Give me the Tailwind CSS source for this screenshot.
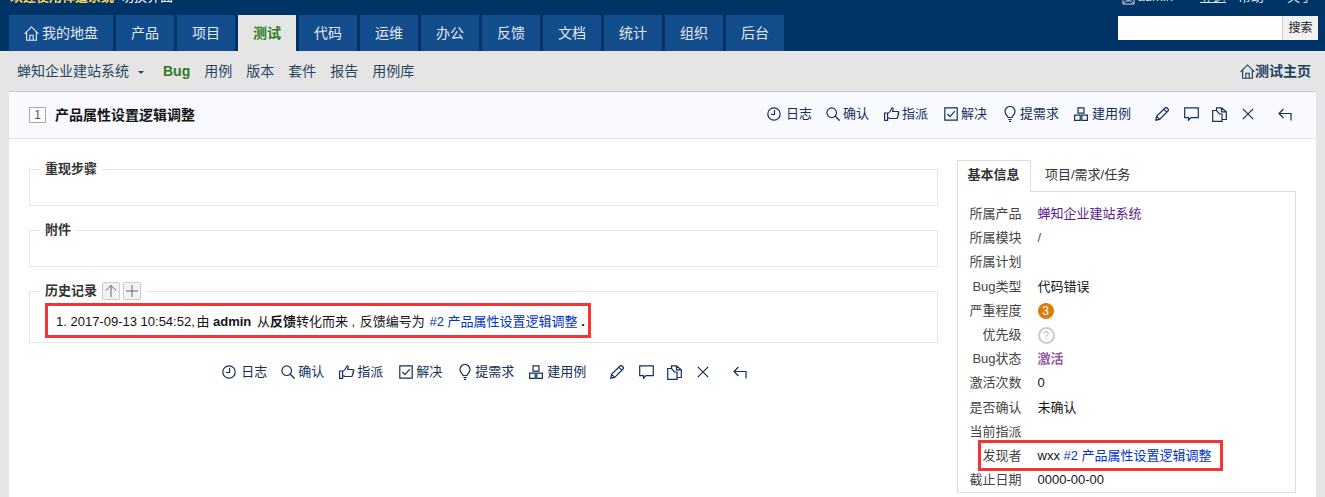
<!DOCTYPE html>
<html lang="zh-CN">
<head>
    <meta charset="UTF-8">
    <meta name="viewport" content="width=device-width, initial-scale=1.0">
    <title>产品属性设置逻辑调整</title>
    <script src="https://cdn.jsdelivr.net/npm/@tailwindcss/browser@4"></script>
</head>
<body class="relative h-[497px] overflow-hidden bg-[#e5e5e5] text-[13px] leading-[18px] text-[#141414] font-['Liberation_Sans','Noto_Sans_CJK_SC',sans-serif]">

    <!-- Icon sprite -->
    <svg class="hidden" xmlns="http://www.w3.org/2000/svg">
        <symbol id="i-home" viewBox="0 0 16 16"><path d="M.6 8.4 8 1l7.400 7.400M2.800 6.400v8.800h10.400V6.400M6.200 15.200V9.800h3.600v5.400" fill="none" stroke="currentColor" stroke-width="1.200"/></symbol>
        <symbol id="i-user" viewBox="0 0 14 14"><path d="M1 1h12v12H1zM2 12.500c.5-2.500 2.500-3 5-3s4.500.5 5 3M7 3a2.800 2.800 0 1 0 0 5.600A2.800 2.800 0 0 0 7 3" fill="none" stroke="currentColor"/></symbol>
        <symbol id="i-clock" viewBox="0 0 14 14"><circle cx="7" cy="7" r="6.200" fill="none" stroke="currentColor" stroke-width="1.200"/><path d="M7.500 3v4.500H4" fill="none" stroke="currentColor" stroke-width="1.200"/></symbol>
        <symbol id="i-search" viewBox="0 0 14 14"><circle cx="5.700" cy="5.700" r="4.800" fill="none" stroke="currentColor" stroke-width="1.200"/><path d="m9 9 4.600 4.600" fill="none" stroke="currentColor" stroke-width="1.300"/></symbol>
        <symbol id="i-thumb" viewBox="0 0 16 14"><path d="M.6 6h3v7.400h-3zM3.600 6.400c1.600-.6 3-2.200 3.600-4 .3-1 .6-1.800 1.300-1.600.9.300.8 1.900.1 3.700h5.200c1.200 0 1.300 1.500.4 1.800.7.500.5 1.600-.3 1.800.4.700.2 1.500-.5 1.800.2.900-.3 1.600-1.200 1.600H7c-1.400 0-2.200-.6-3.400-.9" fill="none" stroke="currentColor" stroke-width="1.200"/></symbol>
        <symbol id="i-check" viewBox="0 0 14 14"><path d="M.8.800h12.400v12.400H.8z" fill="none" stroke="currentColor" stroke-width="1.200"/><path d="m3.400 7 2.600 2.600 4.800-5.400" fill="none" stroke="currentColor" stroke-width="1.200"/></symbol>
        <symbol id="i-bulb" viewBox="0 0 12 16"><path d="M4 11.500C3.600 9.600 1 8.600 1 5.500a5 5 0 0 1 10 0c0 3.100-2.600 4.100-3 6zM4.300 13.500h3.400M5 15.300h2" fill="none" stroke="currentColor" stroke-width="1.200"/></symbol>
        <symbol id="i-case" viewBox="0 0 14 14"><path d="M4 .8h6v5.400H4zM.6 8.200h5.600v5.200H.6zM7.800 8.200h5.600v5.200H7.800z" fill="none" stroke="currentColor" stroke-width="1.200"/></symbol>
        <symbol id="i-pencil" viewBox="0 0 14 14"><path d="m.8 13.200.8-3.800L10 1c.6-.6 1.400-.6 2 0l1 1c.6.6.6 1.400 0 2l-8.400 8.400zM1.600 9.400l3 3M8.800 2.200l3 3" fill="none" stroke="currentColor" stroke-width="1.200"/></symbol>
        <symbol id="i-comment" viewBox="0 0 15 14"><path d="M.7.800h13.600v9.800H7L4.500 13.200v-2.600H.7z" fill="none" stroke="currentColor" stroke-width="1.200"/></symbol>
        <symbol id="i-copy" viewBox="0 0 15 15"><path d="M.7 3.500h3.800l3 3.500H10v7.300H.7zM4.500 3.500V.8h5l4.800 4v7.700H10M9.500.8v4h4.800" fill="none" stroke="currentColor" stroke-width="1.200"/></symbol>
        <symbol id="i-close" viewBox="0 0 12 12"><path d="m.8.800 10.400 10.400M11.200.800.800 11.200" fill="none" stroke="currentColor" stroke-width="1.200"/></symbol>
        <symbol id="i-back" viewBox="0 0 14 13"><path d="M5.500 1 1 5.500 5.500 10M1 5.500h12V12.500" fill="none" stroke="currentColor" stroke-width="1.200"/></symbol>
    </svg>

    <!-- Top bar -->
    <header class="h-[51px] overflow-hidden bg-[#003366]">
        <div class="-mt-[12px] flex h-[27px] pl-[10px] pr-[12px]">
            <span class="font-bold text-[#ffd75e]">欢迎使用禅道系统</span>
            <span class="ml-[7px] text-white">切换界面</span>
            <div class="ml-auto flex text-[#dfe6ee]">
                <span class="mt-[4px]"><svg class="mr-[3px] h-[13px] w-[13px]"><use href="#i-user"/></svg></span>
                <span>admin</span>
                <span class="ml-[27px] underline">登退</span>
                <span class="ml-[12px]">帮助</span>
                <span class="ml-[23px]">关于</span>
            </div>
        </div>
        <div class="flex items-start pl-[9px] pr-[7px]">
            <nav class="flex h-[36px] gap-[3px]">
                <a class="flex w-[104px] items-center justify-center gap-[3px] bg-[#134d8c] text-sm text-[#e4e9f0]">
                    <svg class="h-[15px] w-[15px]"><use href="#i-home"/></svg>我的地盘
                </a>
                <a class="flex w-[58px] items-center justify-center bg-[#134d8c] text-sm text-[#e4e9f0]">产品</a>
                <a class="flex w-[58px] items-center justify-center bg-[#134d8c] text-sm text-[#e4e9f0]">项目</a>
                <a class="flex w-[58px] items-center justify-center bg-[#e5e5e5] text-sm font-bold text-[#2f7d1e]">测试</a>
                <a class="flex w-[58px] items-center justify-center bg-[#134d8c] text-sm text-[#e4e9f0]">代码</a>
                <a class="flex w-[58px] items-center justify-center bg-[#134d8c] text-sm text-[#e4e9f0]">运维</a>
                <a class="flex w-[58px] items-center justify-center bg-[#134d8c] text-sm text-[#e4e9f0]">办公</a>
                <a class="flex w-[58px] items-center justify-center bg-[#134d8c] text-sm text-[#e4e9f0]">反馈</a>
                <a class="flex w-[58px] items-center justify-center bg-[#134d8c] text-sm text-[#e4e9f0]">文档</a>
                <a class="flex w-[58px] items-center justify-center bg-[#134d8c] text-sm text-[#e4e9f0]">统计</a>
                <a class="flex w-[58px] items-center justify-center bg-[#134d8c] text-sm text-[#e4e9f0]">组织</a>
                <a class="flex w-[58px] items-center justify-center bg-[#134d8c] text-sm text-[#e4e9f0]">后台</a>
            </nav>
            <div class="ml-auto mt-px flex h-[24px]">
                <input type="text" class="h-full w-[164px] bg-white">
                <button class="h-full w-[36px] border-l border-[#ccc] bg-[#f2f2f2] text-xs text-[#222]">搜索</button>
            </div>
        </div>
    </header>

    <!-- Sub navigation -->
    <div class="flex h-[40px] items-center pl-[17px] pr-[14px] text-sm text-[#2b4560]">
        <span>蝉知企业建站系统</span>
        <span class="ml-[9px] mr-[19px] mt-[2px] h-0 w-0 border-x-[3px] border-t-[3px] border-x-transparent border-t-[#2b4560]"></span>
        <a class="mr-[14px] font-bold text-[#2f7d1e]">Bug</a>
        <a class="mr-[14px]">用例</a>
        <a class="mr-[14px]">版本</a>
        <a class="mr-[14px]">套件</a>
        <a class="mr-[14px]">报告</a>
        <a>用例库</a>
        <a class="ml-auto flex items-center font-bold text-[#1f3f60]">
            <svg class="h-[15px] w-[15px]"><use href="#i-home"/></svg>测试主页
        </a>
    </div>

    <!-- Main card -->
    <main class="mx-[9px] h-[420px] border-t border-[#ccc] bg-white">
        <div class="flex h-[47px] items-center border-b border-[#e5e5e5] bg-[#f9faff] pl-[20px] pr-[24px]">
            <span class="flex h-[16px] w-[17px] items-center justify-center border border-[#aaa] bg-white text-xs text-[#555]">1</span>
            <h1 class="ml-[9px] text-sm font-bold">产品属性设置逻辑调整</h1>
            <div class="-mt-[2px] ml-auto flex items-center text-[#12305a]">
                <a class="mr-[14px] flex items-center gap-[5px]"><svg class="h-[14px] w-[14px]"><use href="#i-clock"/></svg>日志</a>
                <a class="mr-[15px] flex items-center gap-[3px]"><svg class="h-[14px] w-[14px]"><use href="#i-search"/></svg>确认</a>
                <a class="mr-[16px] flex items-center gap-[2px]"><svg class="h-[14px] w-[16px]"><use href="#i-thumb"/></svg>指派</a>
                <a class="mr-[17px] flex items-center gap-[3px]"><svg class="h-[14px] w-[14px]"><use href="#i-check"/></svg>解决</a>
                <a class="mr-[15px] flex items-center gap-[4px]"><svg class="h-[16px] w-[12px]"><use href="#i-bulb"/></svg>提需求</a>
                <a class="mr-[24px] flex items-center gap-[4px]"><svg class="h-[14px] w-[14px]"><use href="#i-case"/></svg>建用例</a>
                <a class="mr-[15px]"><svg class="h-[14px] w-[14px]"><use href="#i-pencil"/></svg></a>
                <a class="mr-[13px]"><svg class="h-[14px] w-[15px]"><use href="#i-comment"/></svg></a>
                <a class="mr-[15px]"><svg class="h-[15px] w-[15px]"><use href="#i-copy"/></svg></a>
                <a class="mr-[24px]"><svg class="h-[12px] w-[12px]"><use href="#i-close"/></svg></a>
                <a><svg class="h-[13px] w-[14px]"><use href="#i-back"/></svg></a>
            </div>
        </div>

        <div class="flex gap-[19px] px-[20px]">
            <!-- Left column -->
            <div class="w-[910px] pt-[21px]">
                <fieldset class="h-[46px] border border-[#e5e5e5] pl-[10px]">
                    <legend class="px-[5px] font-bold text-[#333]">重现步骤</legend>
                </fieldset>
                <fieldset class="mt-[15px] h-[46px] border border-[#e5e5e5] pl-[10px]">
                    <legend class="px-[5px] font-bold text-[#333]">附件</legend>
                </fieldset>
                <fieldset class="mt-[15px] h-[61px] border border-[#e5e5e5] pl-[10px]">
                    <legend class="flex items-center px-[5px] font-bold text-[#333]">
                        历史记录
                        <span class="ml-[5px] flex h-[18px] w-[18px] items-center justify-center rounded-[2px] border border-[#ccc] bg-[#f2f2f2] text-[#667]">
                            <svg class="h-[14px] w-[14px]" viewBox="0 0 14 14"><path d="M7 13V1.500M1.800 6.500 7 1.500l5.200 5" fill="none" stroke="currentColor"/></svg>
                        </span>
                        <span class="ml-[3px] flex h-[18px] w-[18px] items-center justify-center rounded-[2px] border border-[#ccc] bg-[#f2f2f2] text-[#667]">
                            <svg class="h-[14px] w-[14px]" viewBox="0 0 14 14"><path d="M7 1v12M1 7h12" fill="none" stroke="currentColor"/></svg>
                        </span>
                    </legend>
                    <p class="mt-[13px] pl-[16px]">1. 2017-09-13 10:54:52, <span class="-ml-[2px]">由</span> <b>admin</b> <span class="ml-[2px]">从</span><b>反馈</b>转化而来 , <span class="ml-px">反馈编号为</span> <a class="ml-px text-[#0033cc]">#2 产品属性设置逻辑调整</a> <b>.</b></p>
                </fieldset>

                <div class="mt-[20px] flex items-center justify-center pl-[3px] text-[#12305a]">
                    <a class="mr-[14px] flex items-center gap-[5px]"><svg class="h-[14px] w-[14px]"><use href="#i-clock"/></svg>日志</a>
                    <a class="mr-[15px] flex items-center gap-[3px]"><svg class="h-[14px] w-[14px]"><use href="#i-search"/></svg>确认</a>
                    <a class="mr-[16px] flex items-center gap-[2px]"><svg class="h-[14px] w-[16px]"><use href="#i-thumb"/></svg>指派</a>
                    <a class="mr-[17px] flex items-center gap-[3px]"><svg class="h-[14px] w-[14px]"><use href="#i-check"/></svg>解决</a>
                    <a class="mr-[15px] flex items-center gap-[4px]"><svg class="h-[16px] w-[12px]"><use href="#i-bulb"/></svg>提需求</a>
                    <a class="mr-[24px] flex items-center gap-[4px]"><svg class="h-[14px] w-[14px]"><use href="#i-case"/></svg>建用例</a>
                    <a class="mr-[15px]"><svg class="h-[14px] w-[14px]"><use href="#i-pencil"/></svg></a>
                    <a class="mr-[13px]"><svg class="h-[14px] w-[15px]"><use href="#i-comment"/></svg></a>
                    <a class="mr-[15px]"><svg class="h-[15px] w-[15px]"><use href="#i-copy"/></svg></a>
                    <a class="mr-[24px]"><svg class="h-[12px] w-[12px]"><use href="#i-close"/></svg></a>
                    <a><svg class="h-[13px] w-[14px]"><use href="#i-back"/></svg></a>
                </div>
            </div>

            <!-- Right column -->
            <aside class="w-[340px] pt-[21px]">
                <div class="flex h-[32px]">
                    <span class="relative z-10 flex h-[32px] w-[74px] items-center justify-center border border-b-0 border-[#ddd] bg-white pb-[3px] font-bold text-[#333]">基本信息</span>
                    <span class="flex w-[114px] items-center justify-center pb-[3px] text-[#333]">项目/需求/任务</span>
                </div>
                <div class="-mt-px border border-[#ddd] pt-[10px]">
                    <dl class="grid grid-cols-[52px_1fr] gap-x-[16px] pl-[12px] text-[#444]">
                        <dt class="h-[24.2px] whitespace-nowrap text-right leading-[24px]">所属产品</dt><dd class="leading-[24px] text-[#551a8b]">蝉知企业建站系统</dd>
                        <dt class="h-[24.2px] whitespace-nowrap text-right leading-[24px]">所属模块</dt><dd class="leading-[24px] text-[#35527a]">/</dd>
                        <dt class="h-[24.2px] whitespace-nowrap text-right leading-[24px]">所属计划</dt><dd></dd>
                        <dt class="h-[24.2px] whitespace-nowrap text-right leading-[24px]">Bug类型</dt><dd class="leading-[24px] text-[#141414]">代码错误</dd>
                        <dt class="h-[24.2px] whitespace-nowrap text-right leading-[24px]">严重程度</dt>
                        <dd class="flex items-center"><span class="flex h-[16px] w-[16px] items-center justify-center rounded-full bg-[#df7a0f] text-xs text-white">3</span></dd>
                        <dt class="h-[24.2px] whitespace-nowrap text-right leading-[24px]">优先级</dt>
                        <dd class="flex items-center"><span class="flex h-[17px] w-[17px] items-center justify-center rounded-full border-2 border-[#ccc] text-[11px] text-[#bbb]">?</span></dd>
                        <dt class="h-[24.2px] whitespace-nowrap text-right leading-[24px]">Bug状态</dt><dd class="font-bold leading-[24px] text-[#8e5ba6]">激活</dd>
                        <dt class="h-[24.2px] whitespace-nowrap text-right leading-[24px]">激活次数</dt><dd class="leading-[24px] text-[#141414]">0</dd>
                        <dt class="h-[24.2px] whitespace-nowrap text-right leading-[24px]">是否确认</dt><dd class="leading-[24px] text-[#141414]">未确认</dd>
                        <dt class="h-[24.2px] whitespace-nowrap text-right leading-[24px]">当前指派</dt><dd></dd>
                        <dt class="h-[24.2px] whitespace-nowrap text-right leading-[24px]">发现者</dt><dd class="leading-[24px] text-[#141414]">wxx <a class="text-[#0033cc]">#2 产品属性设置逻辑调整</a></dd>
                        <dt class="h-[24.2px] whitespace-nowrap text-right leading-[24px]">截止日期</dt><dd class="leading-[24px] text-[#141414]">0000-00-00</dd>
                    </dl>
                </div>
            </aside>
        </div>
    </main>

    <!-- Red annotation boxes drawn over the screenshot -->
    <div class="absolute left-[45px] top-[303px] h-[35px] w-[546px] border-[3px] border-[#f53535]"></div>
    <div class="absolute left-[978px] top-[440px] h-[31px] w-[245px] border-[3px] border-[#f53535]"></div>

</body>
</html>
